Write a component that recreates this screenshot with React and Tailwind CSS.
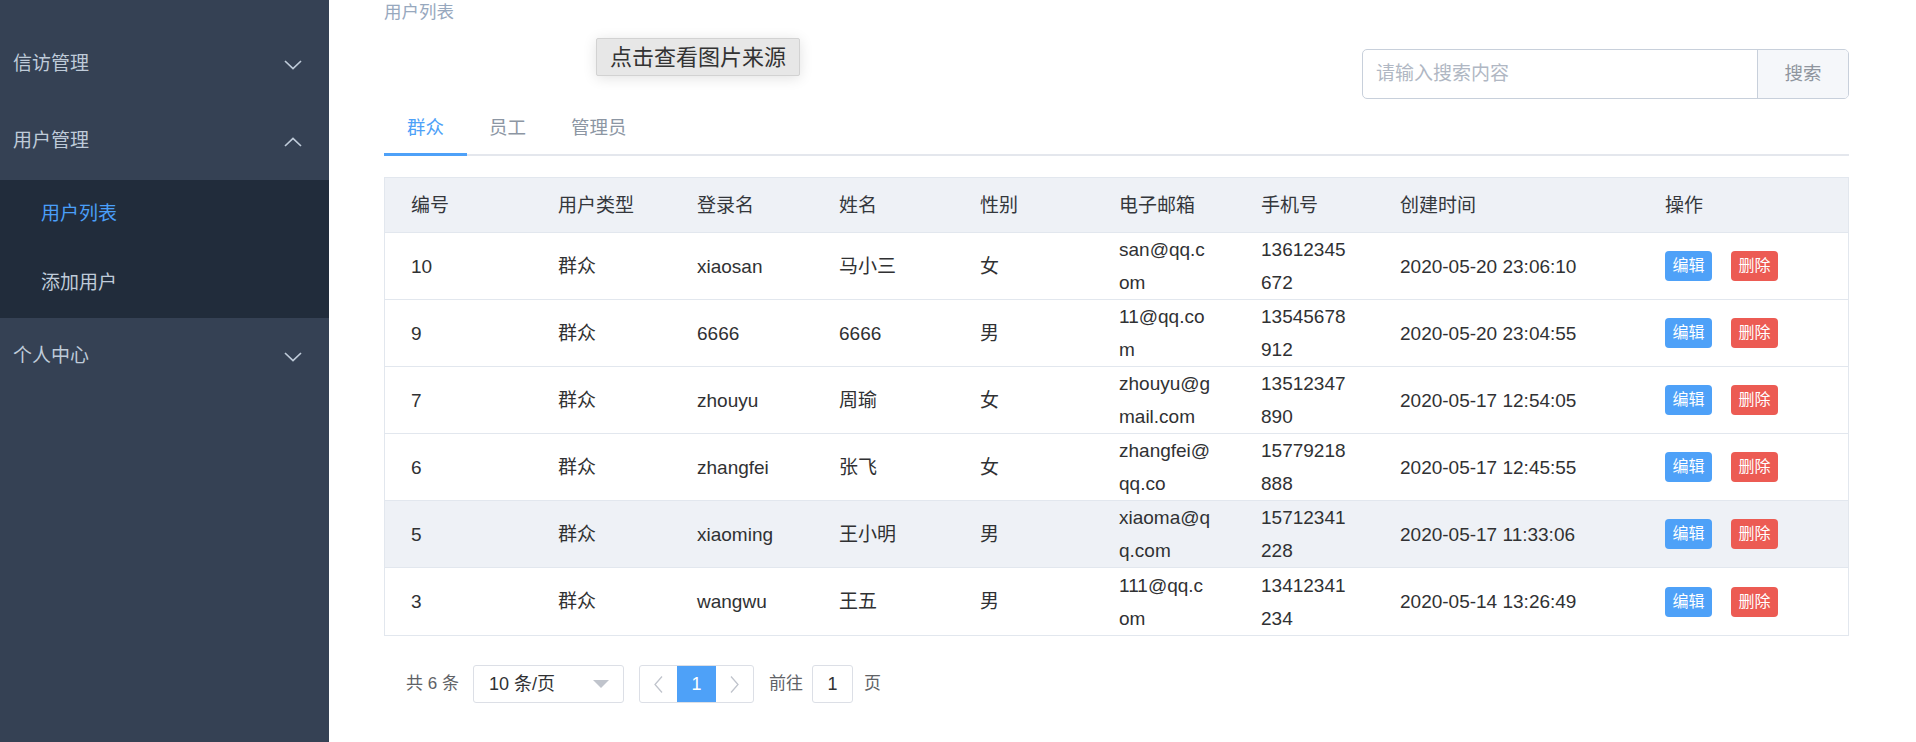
import React from 'react';

const FONT = { fontFamily: '"Liberation Sans", "Noto Sans CJK SC", sans-serif' };

const rows = [
  { id: '10', type: '群众', login: 'xiaosan', name: '马小三', sex: '女', email: ['san@qq.c', 'om'], phone: ['13612345', '672'], time: '2020-05-20 23:06:10' },
  { id: '9', type: '群众', login: '6666', name: '6666', sex: '男', email: ['11@qq.co', 'm'], phone: ['13545678', '912'], time: '2020-05-20 23:04:55' },
  { id: '7', type: '群众', login: 'zhouyu', name: '周瑜', sex: '女', email: ['zhouyu@g', 'mail.com'], phone: ['13512347', '890'], time: '2020-05-17 12:54:05' },
  { id: '6', type: '群众', login: 'zhangfei', name: '张飞', sex: '女', email: ['zhangfei@', 'qq.co'], phone: ['15779218', '888'], time: '2020-05-17 12:45:55' },
  { id: '5', type: '群众', login: 'xiaoming', name: '王小明', sex: '男', email: ['xiaoma@q', 'q.com'], phone: ['15712341', '228'], time: '2020-05-17 11:33:06', hover: true },
  { id: '3', type: '群众', login: 'wangwu', name: '王五', sex: '男', email: ['111@qq.c', 'om'], phone: ['13412341', '234'], time: '2020-05-14 13:26:49' },
];

const headers = ['编号', '用户类型', '登录名', '姓名', '性别', '电子邮箱', '手机号', '创建时间', '操作'];

const GRID = 'grid grid-cols-[147px_139px_142px_141px_139px_142px_139px_265px_1fr]';

function Chevron({ up }) {
  return (
    <svg width="18" height="10" viewBox="0 0 18 10" fill="none" stroke="#bfcbd9" strokeWidth="1.7">
      {up ? <polyline points="1,9 9,1.5 17,9" /> : <polyline points="1,1 9,8.5 17,1" />}
    </svg>
  );
}

function MenuTitle({ label, up }) {
  return (
    <div className="h-[77px] flex items-center justify-between pl-[13px] pr-[27px] text-[19px] text-[#bfcbd9]">
      <span>{label}</span>
      <Chevron up={up} />
    </div>
  );
}

function Sidebar() {
  return (
    <div className="w-[329px] shrink-0 h-full bg-[#354154] pt-[26px]">
      <MenuTitle label="信访管理" />
      <MenuTitle label="用户管理" up />
      <div className="bg-[#212c3b]">
        <div className="h-[69px] flex items-center pl-[41px] text-[19px] text-[#4a9ff9]">用户列表</div>
        <div className="h-[69px] flex items-center pl-[41px] text-[19px] text-[#bfcbd9]">添加用户</div>
      </div>
      <MenuTitle label="个人中心" />
    </div>
  );
}

function Cell({ children }) {
  return <div className="pl-[26px] flex flex-col justify-center overflow-hidden whitespace-nowrap leading-[33px]">{children}</div>;
}

function Lines({ lines }) {
  return lines.map((l) => <span key={l}>{l}</span>);
}

function UserTable() {
  return (
    <div className="mt-[21px] border border-[#e2e7ee] text-[19px] text-[#303133]">
      <div className={`${GRID} h-[55px] bg-[#eef1f6] border-b border-[#e2e7ee] text-[#34373c]`}>
        {headers.map((h) => (
          <Cell key={h}>{h}</Cell>
        ))}
      </div>
      {rows.map((r, i) => (
        <div
          key={r.id}
          className={`${GRID} h-[67px] ${i < rows.length - 1 ? 'border-b border-[#e2e7ee]' : ''} ${r.hover ? 'bg-[#eef1f6]' : 'bg-white'}`}
        >
          <Cell>{r.id}</Cell>
          <Cell>{r.type}</Cell>
          <Cell>{r.login}</Cell>
          <Cell>{r.name}</Cell>
          <Cell>{r.sex}</Cell>
          <Cell><Lines lines={r.email} /></Cell>
          <Cell><Lines lines={r.phone} /></Cell>
          <Cell>{r.time}</Cell>
          <div className="pl-[26px] flex items-center gap-[19px]">
            <button className="w-[47px] h-[30px] rounded-[4px] bg-[#4ea1f8] text-white text-[16px] leading-none">编辑</button>
            <button className="w-[47px] h-[30px] rounded-[4px] bg-[#ec5b53] text-white text-[16px] leading-none">删除</button>
          </div>
        </div>
      ))}
    </div>
  );
}

function Pager() {
  return (
    <div className="mt-[29px] flex items-center h-[38px] pl-[22px] text-[17px] text-[#606266]">
      <span>共 6 条</span>
      <div className="ml-[14px] w-[151px] h-[38px] border border-[#dcdfe6] rounded-[3px] flex items-center justify-between pl-[15px] pr-[14px] text-[18px] text-[#303133]">
        <span>10 条/页</span>
        <svg width="16" height="8" viewBox="0 0 16 8"><polygon points="0,0 16,0 8,8" fill="#c0c4cc" /></svg>
      </div>
      <div className="ml-[15px] flex h-[38px] border border-[#dcdfe6] rounded-[3px] overflow-hidden">
        <div className="w-[37px] flex items-center justify-center">
          <svg width="9" height="17" viewBox="0 0 9 17" fill="none" stroke="#c0c4cc" strokeWidth="1.3"><polyline points="8,0.5 1,8.5 8,16.5" /></svg>
        </div>
        <div className="w-[39px] flex items-center justify-center bg-[#4ea1f8] text-white text-[18px]">1</div>
        <div className="w-[37px] flex items-center justify-center">
          <svg width="9" height="17" viewBox="0 0 9 17" fill="none" stroke="#c0c4cc" strokeWidth="1.3"><polyline points="1,0.5 8,8.5 1,16.5" /></svg>
        </div>
      </div>
      <span className="ml-[15px]">前往</span>
      <div className="ml-[9px] w-[41px] h-[38px] border border-[#dcdfe6] rounded-[3px] flex items-center justify-center text-[18px] text-[#303133]">1</div>
      <span className="ml-[11px]">页</span>
    </div>
  );
}

export default function App() {
  return (
    <div className="flex h-[742px] w-full overflow-hidden bg-white" style={FONT}>
      <Sidebar />
      <div className="relative flex-1 pl-[55px] pr-[67px]">
        <div className="h-[25px] leading-[25px] text-[17.5px] text-[#97a8be]">用户列表</div>

        <div className="mt-[24px] flex justify-end">
          <div className="flex h-[50px] border border-[#c8d0db] rounded-[5px] overflow-hidden">
            <div className="w-[394px] flex items-center pl-[13px] text-[19px] text-[#b0b7c3]">请输入搜索内容</div>
            <div className="w-[91px] flex items-center justify-center border-l border-[#c8d0db] bg-[#f5f7fa] text-[18.5px] text-[#8f959e]">搜索</div>
          </div>
        </div>

        <div className="-mt-[1px] flex border-b-2 border-[#e4e7ed] text-[18.5px]">
          <div className="h-[58px] -mb-[2px] pt-[5px] px-[23px] flex items-center border-b-[3px] border-[#4ea1f8] text-[#4ea1f8]">群众</div>
          <div className="h-[58px] -mb-[2px] pt-[5px] px-[22px] flex items-center border-b-[3px] border-transparent text-[#8c96a3]">员工</div>
          <div className="h-[58px] -mb-[2px] pt-[5px] px-[23px] flex items-center border-b-[3px] border-transparent text-[#8c96a3]">管理员</div>
        </div>

        <UserTable />
        <Pager />

        <div className="absolute left-[267px] top-[38px] w-[204px] h-[38px] flex items-center justify-center bg-[#e7e7e7] border border-[#d2d2d2] rounded-[2px] shadow-[0_2px_14px_rgba(0,0,0,0.12)] text-[22px] text-[#333]">
          点击查看图片来源
        </div>
      </div>
    </div>
  );
}
